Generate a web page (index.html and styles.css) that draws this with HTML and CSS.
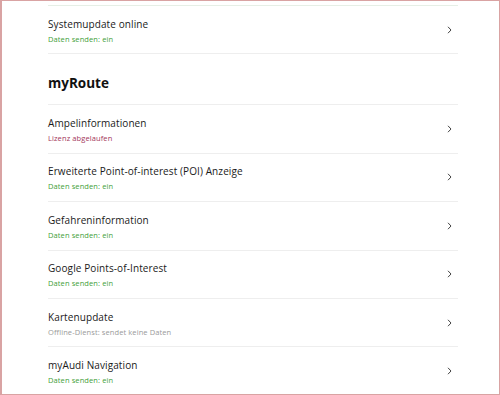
FILE: index.html
```html
<!DOCTYPE html>
<html lang="de">
<head>
  <meta charset="UTF-8">
  <meta name="viewport" content="width=device-width, initial-scale=1.0">
  <title>Dienste - myRoute</title>
  <link rel="stylesheet" href="styles.css">
</head>
<body>
  <main class="services">
    <ul class="service-list first">
      <li class="service">
        <div class="service-text">
          <span class="service-title">Systemupdate online</span>
          <span class="service-status on">Daten senden: ein</span>
        </div>
        <svg class="chevron" viewBox="0 0 5 8"><path d="M1 .8l3 3.2-3 3.2"/></svg>
      </li>
    </ul>

    <h2 class="section-title">myRoute</h2>

    <ul class="service-list">
      <li class="service">
        <div class="service-text">
          <span class="service-title">Ampelinformationen</span>
          <span class="service-status expired">Lizenz abgelaufen</span>
        </div>
        <svg class="chevron" viewBox="0 0 5 8"><path d="M1 .8l3 3.2-3 3.2"/></svg>
      </li>
      <li class="service">
        <div class="service-text">
          <span class="service-title">Erweiterte Point-of-interest (POI) Anzeige</span>
          <span class="service-status on">Daten senden: ein</span>
        </div>
        <svg class="chevron" viewBox="0 0 5 8"><path d="M1 .8l3 3.2-3 3.2"/></svg>
      </li>
      <li class="service">
        <div class="service-text">
          <span class="service-title">Gefahreninformation</span>
          <span class="service-status on">Daten senden: ein</span>
        </div>
        <svg class="chevron" viewBox="0 0 5 8"><path d="M1 .8l3 3.2-3 3.2"/></svg>
      </li>
      <li class="service">
        <div class="service-text">
          <span class="service-title">Google Points-of-Interest</span>
          <span class="service-status on">Daten senden: ein</span>
        </div>
        <svg class="chevron" viewBox="0 0 5 8"><path d="M1 .8l3 3.2-3 3.2"/></svg>
      </li>
      <li class="service">
        <div class="service-text">
          <span class="service-title">Kartenupdate</span>
          <span class="service-status offline">Offline-Dienst: sendet keine Daten</span>
        </div>
        <svg class="chevron" viewBox="0 0 5 8"><path d="M1 .8l3 3.2-3 3.2"/></svg>
      </li>
      <li class="service">
        <div class="service-text">
          <span class="service-title">myAudi Navigation</span>
          <span class="service-status on">Daten senden: ein</span>
        </div>
        <svg class="chevron" viewBox="0 0 5 8"><path d="M1 .8l3 3.2-3 3.2"/></svg>
      </li>
    </ul>
  </main>
</body>
</html>
```

FILE: styles.css
```css
html, body {
  height: 100%;
}

body {
  margin: 0;
  box-sizing: border-box;
  border: 1px solid #d9a3a3;
  border-left-width: 2px;
  background: #fff;
  font-family: "Open Sans", "DejaVu Sans", sans-serif;
  color: #1a1a1a;
  overflow: hidden;
}

.services {
  padding: 4px 0 0 46px;
  width: 410px;
}

.service-list {
  list-style: none;
  margin: 0;
  padding: 0;
}

.service-list.first {
  border-top: 1px solid #e6efe6;
}

.service-list:not(.first) {
  border-top: 1px solid #eeeeee;
}

.service {
  display: flex;
  align-items: center;
  justify-content: space-between;
  box-sizing: border-box;
  height: 48.4px;
  padding-top: 3px;
  border-bottom: 1px solid #eeeeee;
}

.service-text {
  display: flex;
  flex-direction: column;
  gap: 3px;
}

.service-title {
  font-size: 10px;
  line-height: 13px;
  letter-spacing: 0.1px;
  color: #1a1a1a;
}

.service-status {
  font-size: 7.5px;
  line-height: 11px;
  letter-spacing: 0.1px;
}

.service-status.on {
  color: #43a03a;
}

.service-status.expired {
  color: #a3365a;
}

.service-status.offline {
  color: #9a9a9a;
}

.chevron {
  width: 5px;
  height: 8px;
  margin: -3px 6px 0 0;
  fill: none;
  stroke: #444;
  stroke-width: 1;
}

.section-title {
  margin: 0;
  box-sizing: border-box;
  height: 50px;
  padding-top: 8px;
  display: flex;
  align-items: center;
  font-size: 13.5px;
  font-weight: 700;
  color: #111;
}
```
